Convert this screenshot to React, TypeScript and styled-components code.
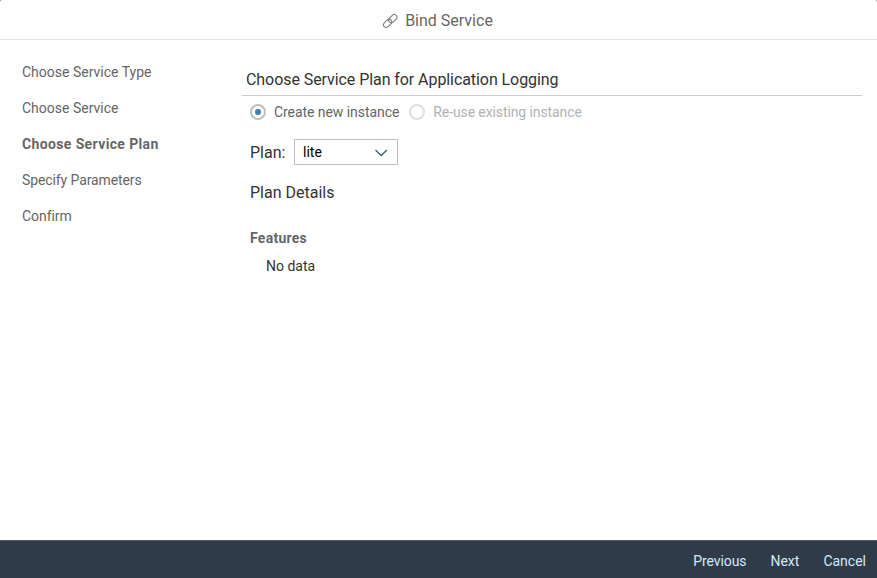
import React from "react";
import styled, { createGlobalStyle } from "styled-components";

const GlobalStyle = createGlobalStyle`
  * { box-sizing: border-box; }
  body { margin: 0; background: #777; }
`;

const Dialog = styled.div`
  display: flex;
  flex-direction: column;
  width: 100%;
  height: 100vh;
  overflow: hidden;
  border-radius: 2px 2px 0 0;
  background: #fff;
  color: #333;
  font: 14px/20px Roboto, "Liberation Sans", sans-serif;
`;

const Header = styled.header`
  display: flex;
  flex: none;
  align-items: center;
  justify-content: center;
  gap: 7px;
  height: 40px;
  padding: 2px 2px 0 0;
  border-bottom: 1px solid #e5e5e5;
  color: #666;
`;

const Text = styled.span<{ $track?: number }>`
  letter-spacing: ${(p) => p.$track ?? 0}px;
  white-space: nowrap;
`;

const Title = styled(Text)`
  font-size: 16px;
`;

const Body = styled.div`
  display: grid;
  flex: 1;
  grid-template-columns: 242px 1fr;
  min-height: 0;
`;

const Steps = styled.nav`
  display: flex;
  flex-direction: column;
  gap: 16px;
  padding: 22px 0 0 22px;
  color: #666;
`;

const Step = styled(Text)<{ $active?: boolean }>`
  font-weight: ${(p) => (p.$active ? 700 : 400)};
`;

const Content = styled.main`
  padding: 24px 15px 0 0;
`;

const SectionHeading = styled.h1`
  margin: 0;
  height: 32px;
  padding: 0 4px;
  border-bottom: 1px solid #ccc;
  font-size: 16px;
  font-weight: 400;
  line-height: 32px;
`;

const Options = styled.div`
  display: flex;
  align-items: center;
  gap: 10px;
  height: 32px;
  padding-left: 8px;
`;

const Option = styled.label<{ $disabled?: boolean }>`
  display: flex;
  align-items: center;
  gap: 8px;
  color: ${(p) => (p.$disabled ? "#b2b2b2" : "#666")};
`;

const Radio = styled.span<{ $checked?: boolean }>`
  display: grid;
  place-items: center;
  width: 16px;
  height: 16px;
  border: 2px solid ${(p) => (p.$checked ? "#bfbfbf" : "#dfdfdf")};
  border-radius: 50%;

  &::after {
    content: "";
    width: 6px;
    height: 6px;
    border-radius: 50%;
    background: ${(p) => (p.$checked ? "#427cac" : "transparent")};
  }
`;

const PlanRow = styled.div`
  display: flex;
  align-items: center;
  gap: 8px;
  margin-top: 11px;
  padding-left: 8px;
`;

const PlanLabel = styled(Text)`
  width: 36px;
  padding-top: 2px;
  font-size: 16px;
`;

const Select = styled.button`
  display: flex;
  align-items: center;
  justify-content: space-between;
  width: 104px;
  height: 26px;
  padding: 0 9px 0 8px;
  border: 1px solid #bfbfbf;
  background: #fff;
  color: #000;
  font: inherit;
`;

const Details = styled.section`
  display: flex;
  flex-direction: column;
  padding: 18px 8px 0;
`;

const DetailsTitle = styled(Text)`
  font-size: 16px;
`;

const Subheading = styled(Text)`
  margin-top: 25px;
  color: #666;
  font-weight: 700;
`;

const Empty = styled(Text)`
  margin: 8px 0 0 16px;
`;

const Footer = styled.footer`
  display: flex;
  flex: none;
  align-items: center;
  justify-content: flex-end;
  gap: 24px;
  height: 38px;
  padding: 3px 11px 0 0;
  border-top: 1px solid #4a5f70;
  background: #2f3c48;
`;

const Action = styled.button<{ $track?: number }>`
  padding: 0;
  border: 0;
  background: none;
  color: #d1e8ff;
  font: inherit;
  letter-spacing: ${(p) => p.$track ?? 0}px;
`;

const LinkIcon = () => (
  <svg width="16" height="16" viewBox="0 0 16 16" fill="none" stroke="#777" strokeWidth="1">
    <rect x="-4.7" y="-2.7" width="9.4" height="5.4" rx="2.7" transform="translate(5.6 10.4) rotate(-45)" />
    <rect x="-4.7" y="-2.7" width="9.4" height="5.4" rx="2.7" transform="translate(10.8 5.6) rotate(-45)" />
  </svg>
);

const ChevronIcon = () => (
  <svg width="14" height="9" viewBox="0 0 14 9" fill="none" stroke="#346187" strokeWidth="1.3">
    <path d="M1.5 2l5.7 5.5L13 2" />
  </svg>
);

export default function App() {
  return (
    <>
      <GlobalStyle />
      <Dialog>
        <Header>
          <LinkIcon />
          <Title>Bind Service</Title>
        </Header>
        <Body>
          <Steps>
            <Step>Choose Service Type</Step>
            <Step>Choose Service</Step>
            <Step $track={0.37} $active>Choose Service Plan</Step>
            <Step $track={-0.1}>Specify Parameters</Step>
            <Step $track={-0.05}>Confirm</Step>
          </Steps>
          <Content>
            <SectionHeading>
              <Text $track={-0.07}>Choose Service Plan for Application Logging</Text>
            </SectionHeading>
            <Options>
              <Option>
                <Radio $checked />
                <Text $track={-0.06}>Create new instance</Text>
              </Option>
              <Option $disabled>
                <Radio />
                <Text $track={-0.1}>Re-use existing instance</Text>
              </Option>
            </Options>
            <PlanRow>
              <PlanLabel>Plan:</PlanLabel>
              <Select>
                <Text>lite</Text>
                <ChevronIcon />
              </Select>
            </PlanRow>
            <Details>
              <DetailsTitle>Plan Details</DetailsTitle>
              <Subheading $track={0.27}>Features</Subheading>
              <Empty>No data</Empty>
            </Details>
          </Content>
        </Body>
        <Footer>
          <Action $track={-0.1}>Previous</Action>
          <Action>Next</Action>
          <Action>Cancel</Action>
        </Footer>
      </Dialog>
    </>
  );
}
